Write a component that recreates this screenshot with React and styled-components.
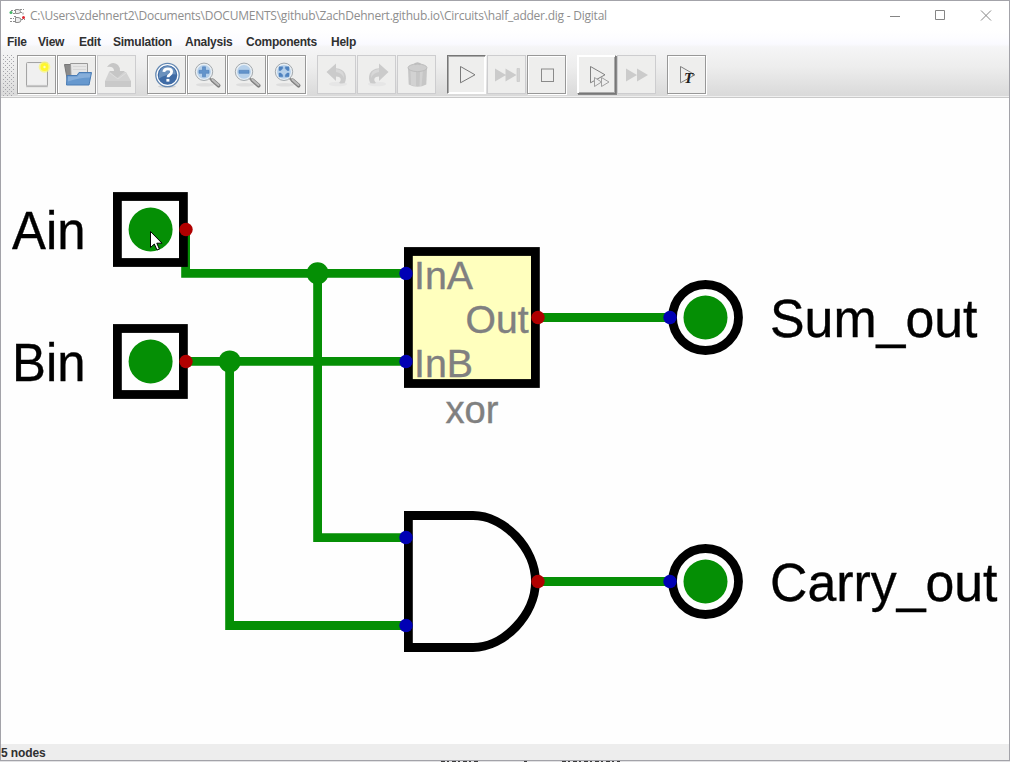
import React from "react";
import styled, { createGlobalStyle } from "styled-components";

const GlobalStyle = createGlobalStyle`
  * { box-sizing: border-box; }
  body { margin: 0; background: #fefefe; overflow: hidden; }
`;

const Desktop = styled.div`
  width: 1010px;
  height: 762px;
  display: flex;
  flex-direction: column;
  background: #e2e2e4;
`;

const Window = styled.div`
  width: 1010px;
  height: 761px;
  display: flex;
  flex-direction: column;
  border: 1px solid #a3a3a9;
  background: #fefefe;
  font-family: "Liberation Sans", Arial, sans-serif;
`;

const TitleBar = styled.header`
  height: 29px;
  flex: none;
  display: flex;
  align-items: center;
  padding: 0 17px 0 8px;
  background: #fff;
`;

const Title = styled.div`
  flex: 1;
  margin-left: 3px;
  font: 12px/16px "Open Sans", "Noto Sans", sans-serif;
  letter-spacing: ${(p) => p.$tracking}px;
  color: #8e8e8e;
  white-space: nowrap;
`;

const WindowControls = styled.div`
  display: flex;
  gap: 33px;
  svg { display: block; }
`;

const Chrome = styled.div`
  flex: none;
  height: 68px;
  background: linear-gradient(#fff 0, #fdfdff 7px, #fafaff 14px, #f5f5f6 17px, #ededed 37px, #dadada 65px);
  border-bottom: 1px solid #c9c9c9;
  box-shadow: inset 0 -1px #efefef;
`;

const MenuBar = styled.nav`
  display: flex;
  height: 25px;
  padding-left: 6px;
  font-size: 12px;
  line-height: 24px;
  font-weight: bold;
  letter-spacing: -0.24px;
  color: #303030;
`;

const MenuItem = styled.span`
  width: ${(p) => p.$w}px;
  white-space: nowrap;
`;

const Toolbar = styled.div`
  display: flex;
  height: 41px;
  padding-left: 2px;
`;

const Grip = styled.div`
  width: 11px;
  height: 41px;
  margin-right: 3px;
  background-image: linear-gradient(90deg, #a4a4aa 1px, transparent 1px), linear-gradient(90deg, #a4a4aa 1px, transparent 1px);
  background-size: 4px 4px;
  background-position: 0 0, 2px 0;
  mask-image: linear-gradient(90deg, #000 1px, transparent 1px), linear-gradient(90deg, #000 1px, transparent 1px);
  mask-image: conic-gradient(from 270deg at 1px 1px, #000 25%, transparent 0), conic-gradient(from 270deg at 1px 1px, #000 25%, transparent 0);
  mask-size: 4px 4px;
  mask-position: 0 0, 2px 2px;
`;

const Group = styled.div`
  display: flex;
  gap: 1px;
  margin-right: 11px;
`;

const edges = {
  normal: "border: 1px solid #989898; box-shadow: inset 1px 1px #fff, 1px 1px #fff;",
  disabled: "border: 1px solid #cdcdcf;",
  pressed: "border: 1px solid; border-color: #777 #fff #fff #777; box-shadow: inset 1px 1px #aaa, inset -1px -1px #fff;",
  raised: "border: 1px solid; border-color: #fff #777 #777 #fff; box-shadow: inset 1px 1px #fff, inset -1px -1px #aaa, 1px 1px #888;",
};

const ToolButton = styled.button`
  width: 39px;
  height: 39px;
  padding: 0 0 2px;
  display: grid;
  place-items: center;
  background: #eeeeed;
  ${(p) => edges[p.$state || "normal"]}
  svg { display: block; }
`;

const Canvas = styled.main`
  flex: 1;
  min-height: 0;
  svg { display: block; }
`;

const StatusBar = styled.footer`
  flex: none;
  height: 16px;
  background: #ededed;
  font-size: 12px;
  line-height: 19px;
  font-weight: bold;
  letter-spacing: -0.1px;
  color: #303030;
`;

const Icon = ({ children, w = 32, h = 32 }) => (
  <svg width={w} height={h} viewBox={`0 0 ${w} ${h}`} fill="none">{children}</svg>
);

const AppIcon = () => (
  <Icon w={18} h={16}>
    <g stroke="#8d8d8d" strokeWidth="1">
      <path d="M2 2.5h4M11 1.5h4M4 5.5h3M11 4.5h3v3M1 10.5h4M1 13.5h5M12 11.5h4M5 8.5h2" strokeDasharray="2 1" />
      <path d="M6.5 1.5h2.5q2.5 0 2.5 2t-2.5 2h-2.5zM6.5 9.5h2.5q3 0 3 2.5t-3 2.5h-2.5z" fill="#eee" />
    </g>
    <circle cx="2" cy="4.5" r="1.5" fill="#45b568" />
    <circle cx="14.5" cy="9.5" r="1.5" fill="#df2630" />
  </Icon>
);

const NewIcon = () => (
  <Icon>
    <path d="M5 28.5h22" stroke="#c8c8c8" strokeWidth="1.5" />
    <rect x="5.5" y="4.5" width="21" height="23.5" rx="1" fill="#ececec" stroke="#a4a4a4" />
    <path d="M7 6h18v20H7z" fill="#f0f0f0" />
    <circle cx="23.5" cy="9" r="5.8" fill="#fbf77a" opacity=".8" />
    <circle cx="23.5" cy="9" r="4" fill="#fff62d" />
    <circle cx="23.5" cy="9" r="1.2" fill="#fffbc0" />
  </Icon>
);

const OpenIcon = () => (
  <Icon>
    <path d="M3.5 6.5h7l2 2h14v17H7z" fill="#8a8a8a" stroke="#777" />
    <path d="M9.5 5.5h17v13H10z" fill="#e6e6e6" stroke="#999" />
    <path d="M12 8.5h13M12 11.5h13" stroke="#d6d6d6" />
    <path d="M6 17.5h10l2-3h12.5l-2.5 12.5H5.5z" fill="#6698ce" stroke="#4a7cb5" />
    <path d="M7 18.5h9.5l2-3h11l-.6 4q-10 0-22 4z" fill="#86aeda" />
  </Icon>
);

const SaveIcon = () => (
  <Icon>
    <path d="M8 14h17l5 9v6H4V23z" fill="#d2d2d2" />
    <path d="M4 23h26v6H4z" fill="#c9c9c9" />
    <path d="M6 9q5-7 11-2 2 2 2 6h5l-8 7-8-7h5q0-5-7-4z" fill="#c6c6c6" />
    <path d="M9 15l8 6 8-6" stroke="#dedede" />
  </Icon>
);

const HelpIcon = () => (
  <Icon>
    <ellipse cx="16" cy="28.5" rx="9" ry="1.5" fill="#d4d4d4" />
    <circle cx="16.5" cy="17" r="11.7" fill="#fff" stroke="#6488b2" strokeWidth="1.3" />
    <circle cx="16.5" cy="17" r="9.8" fill="#3f6ba5" />
    <path d="M8 16.5a8.5 8.5 0 0 1 17 0q-8-1-17 4z" fill="#6b91bd" />
    <path d="M12.8 13.9q.3-3 4-3 3.8 0 3.8 2.8 0 1.8-1.9 3-1.7 1-1.7 2.6" stroke="#fff" strokeWidth="2.8" />
    <path d="M15.4 20.9h3v2.7h-3z" fill="#fff" />
  </Icon>
);

const ZoomIcon = ({ kind }) => (
  <Icon>
    <g transform="translate(0 1.3)">
      <ellipse cx="14" cy="25.5" rx="9" ry="1.8" fill="#dedede" />
      <path d="M18.5 19l3 2.5" stroke="#888" strokeWidth="2" />
      <path d="M21.5 21l6 5.3" stroke="#808080" strokeWidth="4" strokeLinecap="round" />
      <path d="M21.5 20.4l6 5.2" stroke="#bdbdbd" strokeWidth="2" strokeLinecap="round" />
      <circle cx="13" cy="12.5" r="8.7" fill="#e8eff5" stroke="#a3a9ad" />
      <circle cx="13" cy="12.5" r="6.9" fill="#b6d0ea" />
      {kind === "in" && <path d="M11.5 7.5h3V11H18v3h-3.5v3.5h-3V14H8v-3h3.5z" fill="#6394cb" stroke="#4f80bb" strokeWidth=".6" />}
      {kind === "out" && <path d="M8 11h10v3H8z" fill="#6394cb" stroke="#4f80bb" strokeWidth=".6" />}
      {kind === "fit" && (
        <path d="M8 11.2V7.5h3.7v1.8l-1.9 1.9zM14.3 7.5H18v3.7h-1.8l-1.9-1.9zM18 13.8v3.7h-3.7v-1.8l1.9-1.9zM11.7 17.5H8v-3.7h1.8l1.9 1.9z" fill="#4f82bf" stroke="#4f82bf" strokeWidth=".5" />
      )}
    </g>
  </Icon>
);

const ArrowIcon = ({ flip }) => (
  <Icon>
    <g transform={flip ? "matrix(-1 0 0 1 33 0)" : undefined}>
      <ellipse cx="17" cy="26" rx="9" ry="2.3" fill="#e6e6e6" />
      <path d="M5.5 14L15 5.5v4.8c9.5.3 12 9 8.5 15-2 .2-4 .4-5.5-.4 3-3 2-6.4-3-6.4V23z" fill="#cbcbcb" />
      <path d="M15 11q9 1 8 9-2-5-8-6z" fill="#d8d8d8" />
    </g>
  </Icon>
);

const TrashIcon = () => (
  <Icon>
    <path d="M7 10l.7 16.5q9 4.5 17.6 0L26 10z" fill="#c6c6c6" />
    <path d="M9.5 12l.5 15q3 1 5 1V13zM19 13l-.5 15h2L22 12z" fill="#d2d2d2" />
    <ellipse cx="16.5" cy="9.8" rx="9.5" ry="3.8" fill="#cecece" stroke="#bdbdbd" />
    <path d="M13.5 6.5q3-2.5 6 0" stroke="#bebebe" strokeWidth="2" />
  </Icon>
);

const PlayIcon = () => (
  <Icon><path d="M9.5 8.5v16.3L24 16.8z" stroke="#7a7a7a" /></Icon>
);

const SkipIcon = () => (
  <Icon>
    <path d="M4 10.5v13l11-6.5zM14.5 10.5v13l11-6.5z" fill="#cbcbcb" />
    <path d="M26 10.5h2.5v13H26z" fill="#d4d4d4" stroke="#c4c4c4" strokeWidth=".6" />
  </Icon>
);

const StopIcon = () => <Icon><rect x="10.5" y="11" width="12" height="12.5" stroke="#8a8a8a" /></Icon>;

const RunBreakIcon = () => (
  <Icon>
    <path d="M9.5 8.5v16.3L24 16.8z" stroke="#808080" />
    <path d="M13.5 19.5v9l7-4.5zM20.5 19.5v9l7.5-4.5z" fill="#eee" stroke="#a0a0a0" />
  </Icon>
);

const ForwardIcon = () => <Icon><path d="M5 10.5v13L16 17zM16 10.5v13L27 17z" fill="#cbcbcb" /></Icon>;

const TestIcon = () => (
  <Icon>
    <path d="M9.5 8.5v16.3L24 16.8z" stroke="#808080" />
    <text x="13" y="25" fill="#202020" fontFamily="Liberation Serif, serif" fontSize="15" fontWeight="bold" fontStyle="italic">T</text>
  </Icon>
);

const toolGroups = [
  [[NewIcon], [OpenIcon], [SaveIcon, "disabled"]],
  [[HelpIcon], [ZoomIcon, "normal", { kind: "in" }], [ZoomIcon, "normal", { kind: "out" }], [ZoomIcon, "normal", { kind: "fit" }]],
  [[ArrowIcon, "disabled"], [ArrowIcon, "disabled", { flip: true }], [TrashIcon, "disabled"]],
  [[PlayIcon, "pressed"], [SkipIcon, "disabled"], [StopIcon]],
  [[RunBreakIcon, "raised"], [ForwardIcon, "disabled"]],
  [[TestIcon]],
];

const menus = [["File", 31], ["View", 41], ["Edit", 34], ["Simulation", 72], ["Analysis", 61], ["Components", 85], ["Help", 30]];

const GREEN = "#058f05";
const RED = "#b00000";
const BLUE = "#0000b4";

const Pin = ({ x, y, out }) => <circle cx={x} cy={y} r="6.7" fill={out ? RED : BLUE} />;

const Label = ({ x, y, width, children }) => (
  <text x={x} y={y} textLength={width} lengthAdjust="spacingAndGlyphs">{children}</text>
);

const InputSwitch = ({ y }) => (
  <g>
    <rect x="117.4" y={y - 33} width="66" height="66" fill="none" stroke="#000" strokeWidth="8.8" />
    <circle cx="150.6" cy={y} r="22" fill={GREEN} />
    <Pin x={186} y={y} out />
  </g>
);

const OutputLamp = ({ y }) => (
  <g>
    <circle cx="705.5" cy={y} r="33" fill="none" stroke="#000" strokeWidth="8.8" />
    <circle cx="705.5" cy={y} r="22" fill={GREEN} />
    <Pin x={670} y={y} />
  </g>
);

const Circuit = () => (
  <svg width="1008" height="646" viewBox="1 98 1008 646" fontFamily="Liberation Sans, Arial, sans-serif">
    <g fill="none" stroke={GREEN} strokeWidth="8.8">
      <path d="M185.6 229.5V273.3H406M317.6 273.3V537.6H406" />
      <path d="M186 361.4H406M229.6 361.4V625.5H406" />
      <path d="M538 317.5H670M538 581.5H670" />
    </g>
    <circle cx="317.6" cy="273.3" r="11" fill={GREEN} />
    <circle cx="229.7" cy="361.4" r="11" fill={GREEN} />

    <InputSwitch y={229.5} />
    <InputSwitch y={361.5} />

    <rect x="408.4" y="251.5" width="127" height="132" fill="#ffffbe" stroke="#000" strokeWidth="8.8" />
    <g fill="#808080" stroke="#808080" strokeWidth=".4" fontSize="39.6">
      <Label x={414} y={289} width={59}>InA</Label>
      <Label x={414} y={377} width={59}>InB</Label>
      <Label x={465.5} y={333} width={63}>Out</Label>
      <Label x={445.5} y={423} width={53}>xor</Label>
    </g>
    <path d="M408.4 515.5H473C504 515.5 535.5 548.5 535.5 581.5S504 647.5 473 647.5H408.4z" fill="none" stroke="#000" strokeWidth="8.8" />

    <OutputLamp y={317.5} />
    <OutputLamp y={581.5} />
    <Pin x={406} y={273.4} />
    <Pin x={406} y={361.5} />
    <Pin x={538} y={317.5} out />
    <Pin x={406} y={537.5} />
    <Pin x={406} y={625.5} />
    <Pin x={538} y={581.5} out />

    <g fill="#000" stroke="#000" strokeWidth=".35" fontSize="52.8">
      <Label x={12} y={249} width={73.5}>Ain</Label>
      <Label x={12} y={381} width={73.5}>Bin</Label>
      <Label x={770} y={337} width={207.5}>Sum_out</Label>
      <Label x={770} y={601} width={227.5}>Carry_out</Label>
    </g>
    <path d="M150.5 231.5V247.5L154.3 244L157 250L159.4 249L156.8 243.2H162z" fill="#fff" stroke="#000" strokeWidth="1" />
  </svg>
);

export default function App() {
  return (
    <Desktop>
      <GlobalStyle />
      <Window>
        <TitleBar>
          <AppIcon />
          <Title $tracking={-0.235}>C:\Users\zdehnert2\Documents\DOCUMENTS\github\ZachDehnert.github.io\Circuits\half_adder.dig - Digital</Title>
          <WindowControls>
            <Icon w={12} h={12}><path d="M0 6.5h10" stroke="#858585" /></Icon>
            <Icon w={12} h={12}><path d="M.5 .5h9v9h-9z" stroke="#858585" /></Icon>
            <Icon w={12} h={12}><path d="M1 .5l10 10M11 .5L1 10.5" stroke="#858585" /></Icon>
          </WindowControls>
        </TitleBar>
        <Chrome>
          <MenuBar>
            {menus.map(([label, w]) => <MenuItem key={label} $w={w}>{label}</MenuItem>)}
          </MenuBar>
          <Toolbar>
            <Grip />
            {toolGroups.map((group, i) => (
              <Group key={i}>
                {group.map(([Glyph, state, props], j) => (
                  <ToolButton key={j} $state={state}><Glyph {...props} /></ToolButton>
                ))}
              </Group>
            ))}
          </Toolbar>
        </Chrome>
        <Canvas><Circuit /></Canvas>
        <StatusBar>5 nodes</StatusBar>
      </Window>
      <svg width="1010" height="1" viewBox="0 0 1010 1">
        <path d="M441 .5h39M524 .5h3M562 .5h58" stroke="#3a3a3a" strokeDasharray="4 2 2 3" />
      </svg>
    </Desktop>
  );
}
